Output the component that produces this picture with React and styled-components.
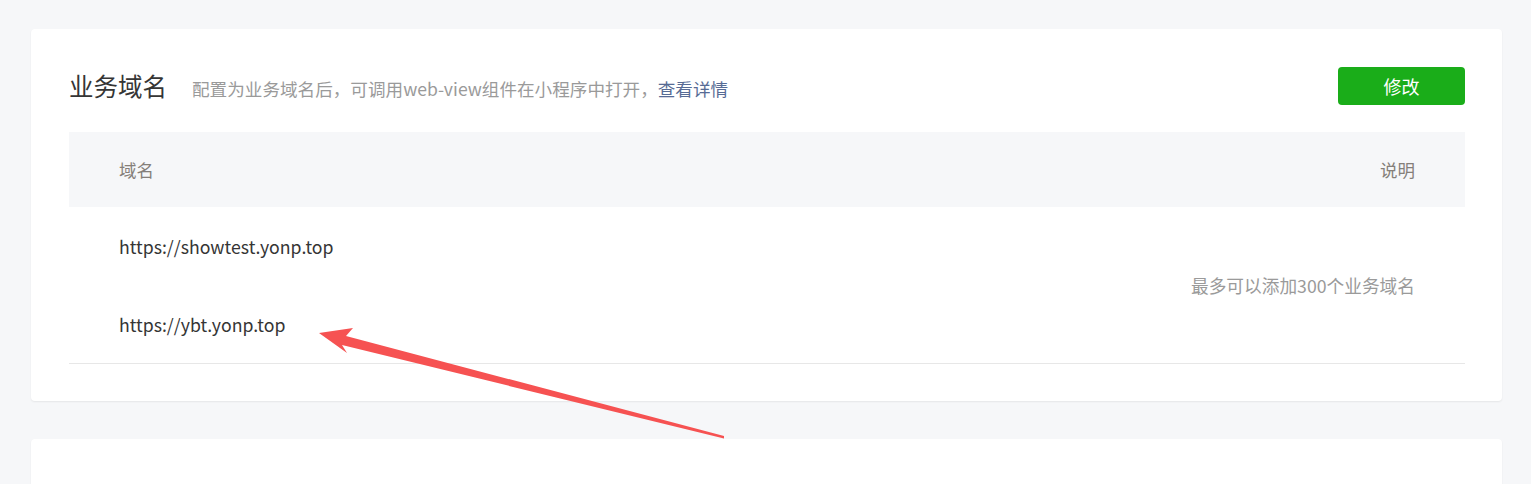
import React from "react";
import styled, { createGlobalStyle } from "styled-components";

const Global = createGlobalStyle`
  html, body { margin: 0; padding: 0; background: #f6f7f9; }
  body { font-family: "Noto Sans CJK SC", "Noto Sans", sans-serif; }
`;

const Page = styled.div`
  position: relative;
  padding: 29px 29px 0 31px;
  display: flex;
  flex-direction: column;
  gap: 38px;
  height: 484px;
  box-sizing: border-box;
  overflow: hidden;
`;

const Card = styled.section`
  flex-shrink: 0;
  background: #fff;
  border-radius: 4px;
  box-shadow: 0 1px 2px rgba(0, 0, 0, 0.07);
  padding: 38px 37px 37px 38px;
  min-height: ${(p) => p.$minH || 0}px;
  box-sizing: border-box;
`;

const Head = styled.div`
  display: flex;
  align-items: center;
  justify-content: space-between;
  height: 38px;
`;

const TitleWrap = styled.div`
  display: flex;
  align-items: baseline;
  gap: 25px;
`;

const Title = styled.h2`
  margin: 0;
  font-size: 24.5px;
  font-weight: 400;
  color: #353535;
  line-height: 38px;
`;

const Desc = styled.span`
  font-size: 17.6px;
  color: #9a9a9a;
`;

const Link = styled.a`
  color: #576b95;
  text-decoration: none;
`;

const Button = styled.button`
  width: 127px;
  height: 38px;
  border: none;
  border-radius: 4px;
  background: #1aad19;
  color: #fff;
  font-family: inherit;
  font-size: 18px;
  cursor: pointer;
`;

const Table = styled.div`
  margin-top: 27px;
  border-bottom: 1px solid #e7e7e7;
`;

const THead = styled.div`
  display: flex;
  justify-content: space-between;
  align-items: center;
  height: 75px;
  background: #f6f7f9;
  padding: 0 50px;
  color: #857f7a;
  font-size: 17.5px;
`;

const TBody = styled.div`
  display: flex;
  justify-content: space-between;
  align-items: center;
  padding: 0 50px;
`;

const Domains = styled.div`
  display: flex;
  flex-direction: column;
`;

const Domain = styled.div`
  height: 78px;
  display: flex;
  align-items: center;
  font-size: 17.7px;
  color: #353535;
`;

const Note = styled.div`
  font-size: 17.7px;
  color: #9a9a9a;
`;

const Arrow = styled.svg`
  position: absolute;
  left: 0;
  top: 0;
  pointer-events: none;
`;

export default function App() {
  return (
    <>
      <Global />
      <Page>
        <Card>
          <Head>
            <TitleWrap>
              <Title>业务域名</Title>
              <Desc>
                配置为业务域名后，可调用web-view组件在小程序中打开，
                <Link href="#">查看详情</Link>
              </Desc>
            </TitleWrap>
            <Button>修改</Button>
          </Head>
          <Table>
            <THead>
              <span>域名</span>
              <span>说明</span>
            </THead>
            <TBody>
              <Domains>
                <Domain>https://showtest.yonp.top</Domain>
                <Domain>https://ybt.yonp.top</Domain>
              </Domains>
              <Note>最多可以添加300个业务域名</Note>
            </TBody>
          </Table>
        </Card>
        <Card $minH={100} />
        <Arrow width="1531" height="484" viewBox="0 0 1531 484">
          <polygon
            points="319,333 353,328 346,336 724,436 724,438.5 342,345 347,353"
            fill="#f65252"
          />
        </Arrow>
      </Page>
    </>
  );
}
